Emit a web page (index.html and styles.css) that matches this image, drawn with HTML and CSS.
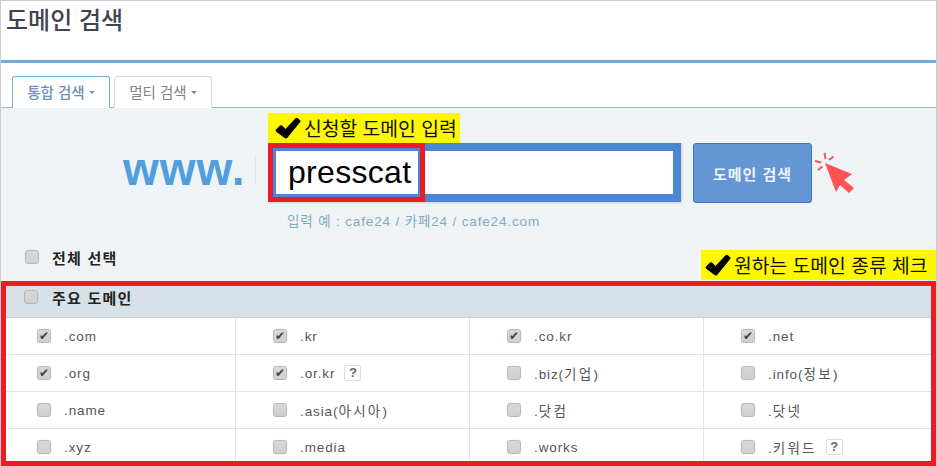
FILE: index.html
```html
<!DOCTYPE html>
<html lang="ko">
  <head>
    <meta charset="UTF-8" />
    <meta name="viewport" content="width=device-width, initial-scale=1.0" />
    <title>도메인 검색</title>
    <link rel="stylesheet" href="styles.css">
  </head>
  <body>
    <div class="page">
      <div class="titleBar">
        <h1>도메인 검색</h1>
      </div>

      <div class="tabs">
        <a class="tab active">통합 검색<span class="caret"></span></a>
        <a class="tab">멀티 검색<span class="caret"></span></a>
      </div>

      <div class="panel">
        <div class="note noteInput">
          <svg class="noteCheck" viewBox="0 0 26 22"><path d="M1 12.5 L5 8.5 Q6 7.8 7 8.6 L10.5 12 L20.5 1.2 Q21.5 .4 22.6 1 L25.3 3.4 Q25.8 4.2 25.2 5 L12.6 20.6 Q11 22.2 9.2 20.8 L1 14.6 Q.3 13.6 1 12.5 Z"/></svg>
          <span>신청할 도메인 입력</span>
        </div>

        <form class="searchRow">
          <div class="www">www.</div>
          <div class="inputWrap">
            <input class="domainInput" type="text" value="presscat" />
            <div class="mark markInput"></div>
          </div>
          <button class="SearchButton" type="button">도메인 검색</button>
          <svg class="cursor" viewBox="0 0 42 42">
            <path class="arrow" d="M11 11 L38 22 L30 28 L40 36 L35 41 L26 33 L22 40 Z"/>
            <path class="rays" d="M1 9 L7 10.5 M10.5 1 L11.5 7 M19.5 4.5 L15 8 M4 18 L8.5 14.5"/>
          </svg>
        </form>
        <p class="hint">입력 예 : cafe24 / 카페24 / cafe24.com</p>

        <label class="selectAll"><input type="checkbox" /><span>전체 선택</span></label>

        <div class="note noteKind">
          <svg class="noteCheck" viewBox="0 0 26 22"><path d="M1 12.5 L5 8.5 Q6 7.8 7 8.6 L10.5 12 L20.5 1.2 Q21.5 .4 22.6 1 L25.3 3.4 Q25.8 4.2 25.2 5 L12.6 20.6 Q11 22.2 9.2 20.8 L1 14.6 Q.3 13.6 1 12.5 Z"/></svg>
          <span>원하는 도메인 종류 체크</span>
        </div>

        <div class="domains">
          <label class="groupHead"><input type="checkbox" /><span>주요 도메인</span></label>
          <div class="grid">
            <label class="cell"><input type="checkbox" checked /><span>.com</span></label>
            <label class="cell"><input type="checkbox" checked /><span>.kr</span></label>
            <label class="cell"><input type="checkbox" checked /><span>.co.kr</span></label>
            <label class="cell"><input type="checkbox" checked /><span>.net</span></label>
            <label class="cell"><input type="checkbox" checked /><span>.org</span></label>
            <label class="cell"><input type="checkbox" checked /><span>.or.kr</span><i class="help">?</i></label>
            <label class="cell"><input type="checkbox" /><span>.biz(<em>기업</em>)</span></label>
            <label class="cell"><input type="checkbox" /><span>.info(<em>정보</em>)</span></label>
            <label class="cell"><input type="checkbox" /><span>.name</span></label>
            <label class="cell"><input type="checkbox" /><span>.asia(<em>아시아</em>)</span></label>
            <label class="cell"><input type="checkbox" /><span>.<em>닷컴</em></span></label>
            <label class="cell"><input type="checkbox" /><span>.<em>닷넷</em></span></label>
            <label class="cell"><input type="checkbox" /><span>.xyz</span></label>
            <label class="cell"><input type="checkbox" /><span>.media</span></label>
            <label class="cell"><input type="checkbox" /><span>.works</span></label>
            <label class="cell"><input type="checkbox" /><span>.<em>키워드</em></span><i class="help">?</i></label>
          </div>
          <div class="mark markDomains"></div>
        </div>
      </div>
    </div>
  </body>
</html>
```

FILE: styles.css
```css
html, body {
    margin: 0;
    padding: 0;
}
body {
    font-family: "Liberation Sans", "Noto Sans CJK KR", sans-serif;
    background-color: #fff;
}
.page {
    box-sizing: border-box;
    width: 937px;
    height: 466px;
    overflow: hidden;
    border-top: 1px solid #ccc;
    border-left: 1px solid #ccc;
    border-right: 1px solid #ccc;
    display: flex;
    flex-direction: column;
}

/* title */
.titleBar {
    box-sizing: border-box;
    height: 62px;
    padding-left: 5px;
    border-bottom: 3px solid #72acdc;
}
h1 {
    margin: 0;
    font-family: "Noto Sans CJK KR", sans-serif;
    font-size: 24px;
    line-height: 36px;
    font-weight: 500;
    color: #3f4450;
}

/* tabs */
.tabs {
    box-sizing: border-box;
    height: 45px;
    padding: 13px 0 0 11px;
    display: flex;
    gap: 4px;
    border-bottom: 1px solid #8fbade;
}
.tab {
    box-sizing: border-box;
    width: 98px;
    height: 32px;
    padding-bottom: 3px;
    border: 1px solid #c9d9e6;
    border-bottom: none;
    border-radius: 3px 3px 0 0;
    background-color: #fff;
    display: flex;
    align-items: center;
    justify-content: center;
    font-family: "Noto Sans CJK KR", sans-serif;
    font-size: 14.5px;
    color: #7c848c;
}
.tab.active {
    border-color: #72acdc;
    color: #6a93b6;
    font-weight: 500;
    height: 33px;
    padding-bottom: 4px;
}
.caret {
    margin: 2px 0 0 4px;
    border-top: 3px solid currentColor;
    border-left: 3px solid transparent;
    border-right: 3px solid transparent;
}

/* search panel */
.panel {
    flex: 1;
    position: relative;
    background-color: #eff3f6;
    padding-top: 35px;
}
.note {
    position: absolute;
    display: flex;
    align-items: center;
    height: 30px;
    background-color: #fff700;
    font-family: "Noto Sans CJK KR", sans-serif;
    font-size: 19.3px;
    color: #111;
    white-space: nowrap;
}
.noteCheck {
    width: 26px;
    height: 22px;
    margin-right: 3px;
    fill: #000;
}
.noteInput {
    top: 5px;
    left: 267px;
    width: 192px;
    padding-left: 7px;
    box-sizing: border-box;
}
.noteKind {
    top: 142px;
    right: 0;
    width: 235px;
    padding-left: 4px;
    box-sizing: border-box;
}
.searchRow {
    display: flex;
    align-items: flex-start;
    margin: 0;
    padding-left: 122px;
}
.www {
    box-sizing: border-box;
    width: 133px;
    height: 27px;
    margin: 14px 12px 0 0;
    border-right: 1px solid #dfe3e7;
    font-size: 46px;
    line-height: 25px;
    font-weight: bold;
    letter-spacing: 1px;
    color: #4f9fdc;
}
.inputWrap {
    position: relative;
    width: 413px;
    height: 59px;
}
.domainInput {
    box-sizing: border-box;
    width: 100%;
    height: 100%;
    border: 8px solid #4a86d4;
    padding: 0 0 0 12px;
    outline: none;
    font-family: "Liberation Sans", sans-serif;
    font-size: 32px;
    letter-spacing: 0.3px;
    color: #000;
    box-shadow: 1px 1px 2px rgba(0, 0, 0, 0.15);
}
.mark {
    position: absolute;
    box-sizing: border-box;
    pointer-events: none;
}
.markInput {
    top: 0;
    left: 0;
    width: 157px;
    height: 59px;
    border: 5px solid #ed1c24;
    box-shadow: inset 0 0 0 2px #4a86d4;
}
.SearchButton {
    box-sizing: border-box;
    width: 119px;
    height: 60px;
    margin-left: 12px;
    background-color: #6496d4;
    border: 1px solid #3b78bb;
    border-radius: 3px;
    font-family: "Noto Sans CJK KR", sans-serif;
    font-size: 15px;
    font-weight: 700;
    letter-spacing: 1px;
    color: #eef4fb;
}
.cursor {
    width: 42px;
    height: 42px;
    margin: 9px 0 0 2px;
}
.arrow {
    fill: #ff5252;
}
.rays {
    fill: none;
    stroke: #ff5252;
    stroke-width: 2;
}
.hint {
    margin: 9px 0 0 286px;
    font-family: "Liberation Sans", "Noto Sans CJK KR", sans-serif;
    font-size: 13.5px;
    line-height: 20px;
    letter-spacing: 0.85px;
    color: #86a9bf;
}

/* checkboxes */
input[type="checkbox"] {
    appearance: none;
    box-sizing: border-box;
    flex: none;
    width: 14px;
    height: 14px;
    margin: 0;
    border: 1px solid #b9b9b9;
    border-radius: 3px;
    background: linear-gradient(#d8d8d8, #cfcfcf);
    box-shadow: 0 0 1px #ccc;
    display: flex;
    align-items: center;
    justify-content: center;
}
input[type="checkbox"]:checked::after {
    content: "\2714";
    font-family: "DejaVu Sans", sans-serif;
    font-size: 12px;
    line-height: 12px;
    color: #444;
}
.selectAll {
    display: flex;
    align-items: center;
    gap: 13px;
    height: 20px;
    margin: 15px 0 0 24px;
    font-family: "Noto Sans CJK KR", sans-serif;
    font-size: 15px;
    font-weight: 700;
    letter-spacing: 1.2px;
    color: #222;
}

/* domain table */
.domains {
    position: relative;
    margin-top: 14px;
}
.markDomains {
    top: 0;
    left: 0;
    right: 0;
    height: 185px;
    border: 5px solid #ed1c24;
}
.groupHead {
    box-sizing: border-box;
    display: flex;
    align-items: center;
    gap: 14px;
    height: 37px;
    padding: 0 0 4px 23px;
    background-color: #d8e0e8;
    border-bottom: 1px solid #c9d3dc;
    font-family: "Noto Sans CJK KR", sans-serif;
    font-size: 15px;
    font-weight: 700;
    letter-spacing: 1.2px;
    color: #222;
}
.grid {
    display: grid;
    grid-template-columns: 235px 234px 234px 232px;
    grid-auto-rows: 37px;
    background-color: #fff;
}
.cell {
    box-sizing: border-box;
    display: flex;
    align-items: center;
    padding-left: 37px;
    border-bottom: 1px solid #e2e5e8;
    border-right: 1px solid #e2e5e8;
    font-size: 13.5px;
    letter-spacing: 0.9px;
    color: #555;
}
.cell:nth-child(4n+1) {
    padding-left: 36px;
}
.cell span {
    margin-left: 13px;
}
.cell em {
    font-style: normal;
    letter-spacing: 2.3px;
}
.help {
    box-sizing: border-box;
    width: 17px;
    height: 16px;
    margin-left: 9px;
    border: 1px solid #ddd;
    border-radius: 2px;
    background-color: #fff;
    font-size: 13px;
    font-style: normal;
    font-weight: bold;
    line-height: 14px;
    letter-spacing: 0;
    text-align: center;
    color: #666;
}
```
